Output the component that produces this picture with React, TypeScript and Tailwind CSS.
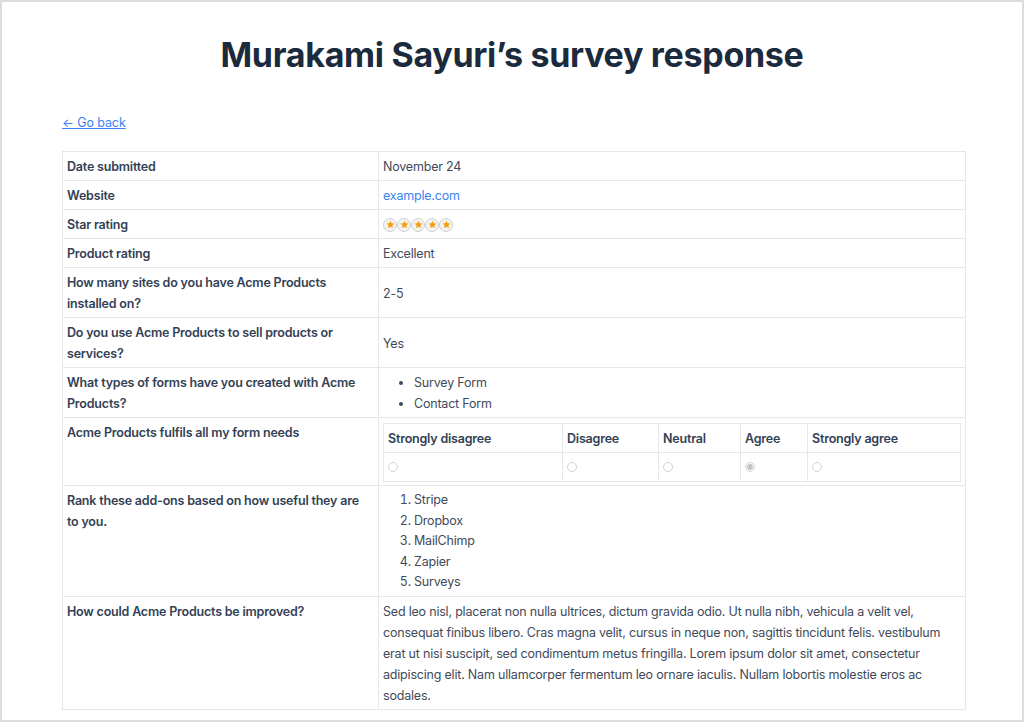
import React from "react";

const label = "pl-[4px] pr-[8px] pt-[4px] pb-[3px] align-top font-semibold text-[#334155] border border-[#e5e7eb]";
const value = "px-[4px] pt-[4px] pb-[3px] align-middle text-[#3f4a5a] border border-[#e5e7eb]";

function Star() {
    return (
        <span className="inline-flex items-center justify-center w-[14px] h-[14px] rounded-full border border-[#cfcfcf] bg-[#f3f3f3]">
            <svg viewBox="0 0 24 24" width="9" height="9">
                <path d="M12 2l3 6.9 7.5.7-5.7 5 1.7 7.4L12 18.1 5.5 22l1.7-7.4-5.7-5 7.5-.7z" fill="#f59e0b" />
            </svg>
        </span>
    );
}

function Radio({ checked }: { checked?: boolean }) {
    return (
        <span className="inline-flex items-center justify-center w-[10px] h-[10px] rounded-full border border-[#d4d4d4] bg-white">
            {checked && <span className="w-[6px] h-[6px] rounded-full bg-[#c4c4c4]" />}
        </span>
    );
}

export default function App() {
    const scale = ["Strongly disagree", "Disagree", "Neutral", "Agree", "Strongly agree"];
    const widths = ["w-[179px]", "w-[96px]", "w-[82px]", "w-[67px]", ""];
    const addons = ["Stripe", "Dropbox", "MailChimp", "Zapier", "Surveys"];

    return (
        <div className="h-[722px] border-2 border-[#dcdcdc] bg-white overflow-hidden" style={{ fontFamily: "Inter, 'Noto Sans', sans-serif" }}>
            <h1 className="pt-[31px] text-center text-[34px] leading-[44px] font-bold text-[#1b2a3c] tracking-[-0.3px]">Murakami Sayuri’s survey response</h1>
            <div className="pl-[60px] pt-[32px]">
                <a href="#" className="text-[12.5px] leading-[18px] tracking-[-0.1px] text-[#3b82f6] underline">← Go back</a>
            </div>
            <div className="pl-[60px] pt-[18px]">
                <table className="w-[904px] border-collapse text-[12.5px] leading-[21px] tracking-[-0.2px]">
                    <tbody>
                        <tr>
                            <td className={`${label} w-[316px]`}>Date submitted</td>
                            <td className={value}>November 24</td>
                        </tr>
                        <tr>
                            <td className={label}>Website</td>
                            <td className={value}><a href="#" className="text-[#3b82f6]">example.com</a></td>
                        </tr>
                        <tr>
                            <td className={label}>Star rating</td>
                            <td className={value}>
                                <div className="flex h-[21px] items-center">
                                    <Star /><Star /><Star /><Star /><Star />
                                </div>
                            </td>
                        </tr>
                        <tr>
                            <td className={label}>Product rating</td>
                            <td className={value}>Excellent</td>
                        </tr>
                        <tr>
                            <td className={label}>How many sites do you have Acme Products installed on?</td>
                            <td className={value}>2-5</td>
                        </tr>
                        <tr>
                            <td className={label}>Do you use Acme Products to sell products or services?</td>
                            <td className={value}>Yes</td>
                        </tr>
                        <tr>
                            <td className={label}>What types of forms have you created with Acme Products?</td>
                            <td className={value}>
                                <ul className="list-disc pl-[31px]">
                                    <li>Survey Form</li>
                                    <li>Contact Form</li>
                                </ul>
                            </td>
                        </tr>
                        <tr>
                            <td className={label}>Acme Products fulfils all my form needs</td>
                            <td className="px-[4px] pt-[5px] pb-[3px] border border-[#e5e7eb]">
                                <table className="w-full border-collapse">
                                    <tbody>
                                        <tr>
                                            {scale.map((s, i) => (
                                                <td key={s} className={`${widths[i]} px-[4px] pt-[4px] pb-[3px] font-semibold text-[#334155] border border-[#e5e7eb]`}>{s}</td>
                                            ))}
                                        </tr>
                                        <tr>
                                            {scale.map((s, i) => (
                                                <td key={s} className="px-[4px] h-[29px] border border-[#e5e7eb]">
                                                    <div className="flex items-center"><Radio checked={i === 3} /></div>
                                                </td>
                                            ))}
                                        </tr>
                                    </tbody>
                                </table>
                            </td>
                        </tr>
                        <tr>
                            <td className={label}>Rank these add-ons based on how useful they are to you.</td>
                            <td className={`${value} align-top`}>
                                <ol className="list-decimal pl-[31px] leading-[20.6px]">
                                    {addons.map((a) => <li key={a}>{a}</li>)}
                                </ol>
                            </td>
                        </tr>
                        <tr>
                            <td className={label}>How could Acme Products be improved?</td>
                            <td className={`${value} align-top`}>
                                Sed leo nisl, placerat non nulla ultrices, dictum gravida odio. Ut nulla nibh, vehicula a velit vel, consequat finibus libero. Cras magna velit, cursus in neque non, sagittis tincidunt felis. vestibulum erat ut nisi suscipit, sed condimentum metus fringilla. Lorem ipsum dolor sit amet, consectetur adipiscing elit. Nam ullamcorper fermentum leo ornare iaculis. Nullam lobortis molestie eros ac sodales.
                            </td>
                        </tr>
                    </tbody>
                </table>
            </div>
        </div>
    );
}
